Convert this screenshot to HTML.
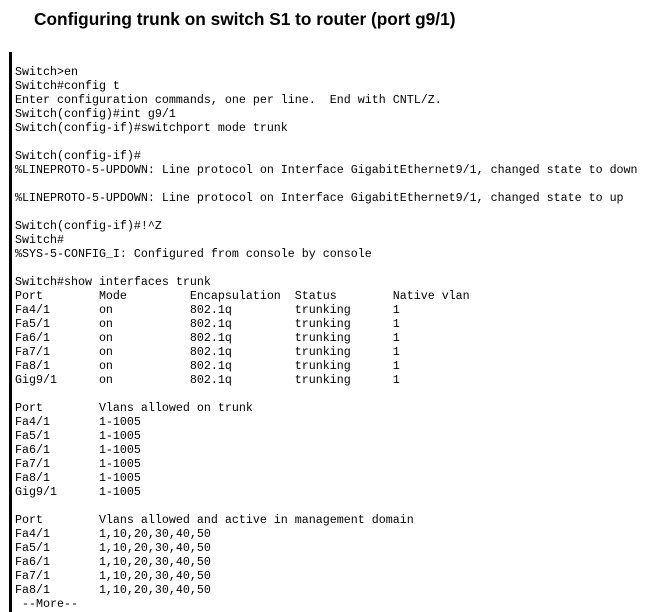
<!DOCTYPE html>
<html><head><meta charset="utf-8"><style>
html,body{margin:0;padding:0;background:#fff;width:656px;height:612px;overflow:hidden;position:relative}
h1{position:absolute;left:34px;top:9px;margin:0;font:bold 17.3px "Liberation Sans",sans-serif;color:#000;white-space:nowrap}
.bar{position:absolute;left:9px;top:52px;width:3px;height:560px;background:#000}
pre{position:absolute;left:15px;top:65px;margin:0;font-family:"Liberation Mono",monospace;font-size:11.67px;line-height:14px;color:#000}
</style></head><body>
<h1>Configuring trunk on switch S1 to router (port g9/1)</h1>
<div class="bar"></div>
<pre>Switch&gt;en
Switch#config t
Enter configuration commands, one per line.  End with CNTL/Z.
Switch(config)#int g9/1
Switch(config-if)#switchport mode trunk

Switch(config-if)#
%LINEPROTO-5-UPDOWN: Line protocol on Interface GigabitEthernet9/1, changed state to down

%LINEPROTO-5-UPDOWN: Line protocol on Interface GigabitEthernet9/1, changed state to up

Switch(config-if)#!^Z
Switch#
%SYS-5-CONFIG_I: Configured from console by console

Switch#show interfaces trunk
Port        Mode         Encapsulation  Status        Native vlan
Fa4/1       on           802.1q         trunking      1
Fa5/1       on           802.1q         trunking      1
Fa6/1       on           802.1q         trunking      1
Fa7/1       on           802.1q         trunking      1
Fa8/1       on           802.1q         trunking      1
Gig9/1      on           802.1q         trunking      1

Port        Vlans allowed on trunk
Fa4/1       1-1005
Fa5/1       1-1005
Fa6/1       1-1005
Fa7/1       1-1005
Fa8/1       1-1005
Gig9/1      1-1005

Port        Vlans allowed and active in management domain
Fa4/1       1,10,20,30,40,50
Fa5/1       1,10,20,30,40,50
Fa6/1       1,10,20,30,40,50
Fa7/1       1,10,20,30,40,50
Fa8/1       1,10,20,30,40,50
 --More--</pre>
</body></html>
